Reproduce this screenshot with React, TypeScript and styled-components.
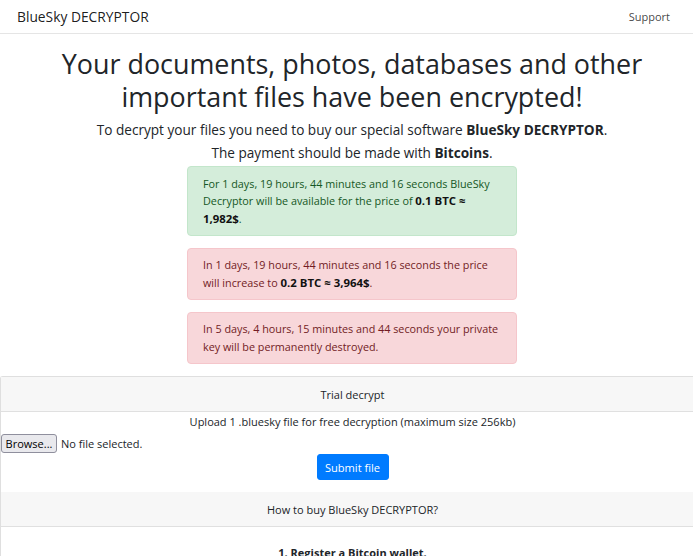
import React from "react";
import styled, { createGlobalStyle } from "styled-components";

const Global = createGlobalStyle`
  html, body { margin: 0; padding: 0; background: #fff; }
  body {
    font-family: "Open Sans", "Noto Sans", Arial, sans-serif;
    color: #212529;
    overflow: hidden;
    width: 693px;
  }
  * { box-sizing: border-box; }
`;

const Navbar = styled.nav`
  width: 693px;
  height: 34px;
  display: flex;
  align-items: center;
  justify-content: space-between;
  padding: 0 23px 1px 17px;
  border-bottom: 1px solid #e5e5e5;
`;

const Brand = styled.a`
  font-size: 13.8px;
  color: rgba(0, 0, 0, 0.9);
  text-decoration: none;
`;

const NavLink = styled.a`
  font-size: 11px;
  color: rgba(0, 0, 0, 0.75);
  text-decoration: none;
`;

const Main = styled.main`
  width: 704px;
  display: flex;
  flex-direction: column;
  align-items: center;
`;

const Title = styled.h1`
  margin: 13px 0 0;
  font-size: 26.9px;
  font-weight: 400;
  line-height: 33px;
  text-align: center;
  color: #212529;
`;

const Lead = styled.p`
  margin: 5px 0 0;
  font-size: 13.6px;
  line-height: 23px;
  text-align: center;
`;

const Alerts = styled.div`
  width: 330px;
  margin-top: 2px;
  display: flex;
  flex-direction: column;
  gap: 12px;
`;

const Alert = styled.div<{ $tone: "success" | "danger" }>`
  padding: 7.5px 15px;
  border-radius: 4px;
  font-size: 10.8px;
  line-height: 17.5px;
  border: 1px solid ${(p) => (p.$tone === "success" ? "#c3e6cb" : "#f5c6cb")};
  background: ${(p) => (p.$tone === "success" ? "#d4edda" : "#f8d7da")};
  color: ${(p) => (p.$tone === "success" ? "#155724" : "#721c24")};
`;

const Strong = styled.b`
  color: #111;
  font-weight: 700;
  font-size: 11.4px;
`;

const Card = styled.section`
  width: 704px;
  margin-top: 12.5px;
  border: 1px solid #dfdfdf;
  border-right: 0;
  border-bottom: 0;
  border-radius: 3px 0 0 0;
`;

const CardHeader = styled.div`
  height: 35px;
  display: flex;
  align-items: center;
  justify-content: center;
  background: #f7f7f7;
  border-bottom: 1px solid #e0e0e0;
  font-size: 11px;
  color: #212529;
`;

const CardBody = styled.div`
  display: flex;
  flex-direction: column;
  align-items: center;
  padding: 0 0 12px;
`;

const Note = styled.p`
  margin: 1px 0 0;
  font-size: 11px;
  line-height: 18px;
  text-align: center;
`;

const FileRow = styled.div`
  align-self: flex-start;
  display: flex;
  align-items: center;
  gap: 4px;
  margin-top: 3px;
  font-size: 11px;
`;

const BrowseButton = styled.button`
  height: 19px;
  width: 56px;
  padding: 0;
  font-family: inherit;
  font-size: 11px;
  color: #000;
  background: #e9e9ed;
  border: 1px solid #8f8f9d;
  border-radius: 3px;
  line-height: 1;
`;

const SubmitButton = styled.button`
  margin-top: 1px;
  width: 72px;
  height: 26px;
  font-family: inherit;
  font-size: 11.1px;
  color: #fff;
  background: #007bff;
  border: 1px solid #007bff;
  border-radius: 3px;
  padding: 0;
`;

const Step = styled.p`
  margin: 17px 0 0;
  font-size: 11px;
  line-height: 18px;
  font-weight: 700;
  text-align: center;
`;

export default function App() {
  return (
    <>
      <Global />
      <Navbar>
        <Brand href="#">BlueSky DECRYPTOR</Brand>
        <NavLink href="#">Support</NavLink>
      </Navbar>
      <Main>
        <Title>
          Your documents, photos, databases and other
          <br />
          important files have been encrypted!
        </Title>
        <Lead>
          To decrypt your files you need to buy our special software <b>BlueSky DECRYPTOR</b>.
          <br />
          The payment should be made with <b>Bitcoins</b>.
        </Lead>
        <Alerts>
          <Alert $tone="success">
            For 1 days, 19 hours, 44 minutes and 16 seconds BlueSky Decryptor will be available for the price of{" "}
            <Strong>0.1 BTC ≈ 1,982$</Strong>.
          </Alert>
          <Alert $tone="danger">
            In 1 days, 19 hours, 44 minutes and 16 seconds the price will increase to{" "}
            <Strong>0.2 BTC ≈ 3,964$</Strong>.
          </Alert>
          <Alert $tone="danger">
            In 5 days, 4 hours, 15 minutes and 44 seconds your private key will be permanently destroyed.
          </Alert>
        </Alerts>
        <Card>
          <CardHeader>Trial decrypt</CardHeader>
          <CardBody>
            <Note>Upload 1 .bluesky file for free decryption (maximum size 256kb)</Note>
            <FileRow>
              <BrowseButton type="button">Browse...</BrowseButton>
              <span>No file selected.</span>
            </FileRow>
            <SubmitButton type="button">Submit file</SubmitButton>
          </CardBody>
          <CardHeader>How to buy BlueSky DECRYPTOR?</CardHeader>
          <CardBody>
            <Step>1. Register a Bitcoin wallet.</Step>
          </CardBody>
        </Card>
      </Main>
    </>
  );
}
